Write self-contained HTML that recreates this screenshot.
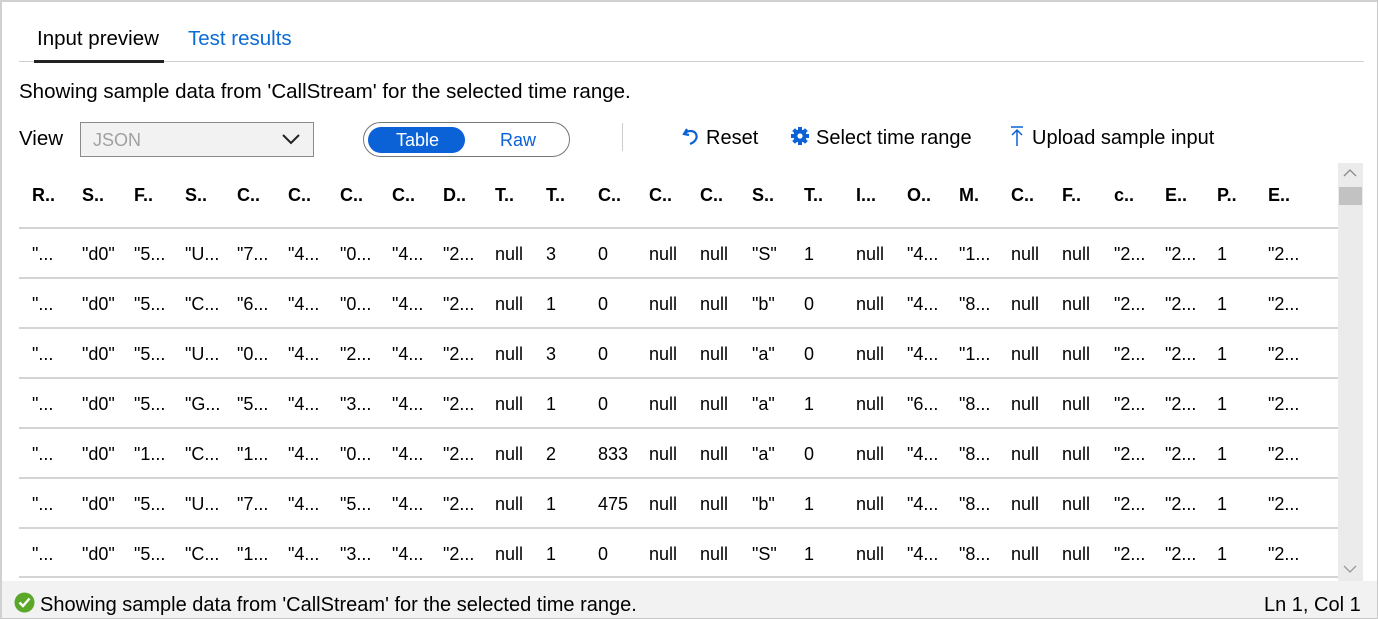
<!DOCTYPE html>
<html><head><meta charset="utf-8"><style>
*{margin:0;padding:0;box-sizing:border-box}
body{width:1378px;height:619px;overflow:hidden;background:#fff;font-family:"Liberation Sans",sans-serif;color:#000;position:relative}
.frame{position:absolute;left:0;top:0;width:1378px;height:619px;border:1px solid #c8c8c8;border-top:2px solid #d0d0d0;border-left:2px solid #d0d0d0}
.a{position:absolute;white-space:nowrap}
.hl{position:absolute;left:19px;width:1319px;height:2px;background:#d4d4d4}
.c{position:absolute;font-size:18px;white-space:nowrap}
.h{font-weight:bold}
</style></head><body>
<div class="frame"></div>
<div class="a" style="left:37px;top:27px;font-size:20.5px">Input preview</div>
<div class="a" style="left:188px;top:27px;font-size:20.5px;color:#0a6ad6">Test results</div>
<div class="a" style="left:19px;top:61px;width:1345px;height:1px;background:#d0d0d0"></div>
<div class="a" style="left:34px;top:60px;width:130px;height:3px;background:#222"></div>
<div class="a" style="left:19px;top:80px;font-size:20.5px">Showing sample data from 'CallStream' for the selected time range.</div>
<div class="a" style="left:19px;top:127px;font-size:20.5px">View</div>
<div class="a" style="left:80px;top:122px;width:234px;height:35px;background:#f2f2f2;border:1px solid #8a8a8a"></div>
<div class="a" style="left:93px;top:130px;font-size:18px;color:#a0a0a0">JSON</div>
<svg class="a" style="left:281px;top:132px" width="20" height="14"><path d="M2 3 L10 11 L18 3" fill="none" stroke="#222" stroke-width="2"/></svg>
<div class="a" style="left:363px;top:122px;width:207px;height:35px;border:1.5px solid #777;border-radius:18px"></div>
<div class="a" style="left:368px;top:127px;width:97px;height:26px;background:#0a62d6;border-radius:13px"></div>
<div class="a" style="left:396px;top:130px;font-size:18px;color:#fff">Table</div>
<div class="a" style="left:500px;top:130px;font-size:18px;color:#0a62d6">Raw</div>
<div class="a" style="left:622px;top:123px;width:1px;height:28px;background:#ccc"></div>
<svg class="a" style="left:681px;top:126px" width="20" height="20"><path d="M6 3 L3 8 L8 9 M3.5 8 C6 4 13 4 15 8 C17 12 14 16 9 18" fill="none" stroke="#0a62d6" stroke-width="2.2"/></svg>
<div class="a" style="left:706px;top:127px;font-size:20px">Reset</div>
<svg class="a" style="left:790px;top:126px" width="20" height="20" viewBox="0 0 20 20"><g fill="#0a62d6"><circle cx="10" cy="10" r="6.5"/><rect x="8" y="1" width="4" height="18"/><rect x="1" y="8" width="18" height="4"/><rect x="8" y="1" width="4" height="18" transform="rotate(45 10 10)"/><rect x="8" y="1" width="4" height="18" transform="rotate(-45 10 10)"/></g><circle cx="10" cy="10" r="2.6" fill="#fff"/></svg>
<div class="a" style="left:816px;top:127px;font-size:20px">Select time range</div>
<svg class="a" style="left:1009px;top:125px" width="16" height="22"><path d="M2 2 H14 M8 5 V21 M3 10 L8 5 L13 10" fill="none" stroke="#0a62d6" stroke-width="1.5"/></svg>
<div class="a" style="left:1032px;top:127px;font-size:20px">Upload sample input</div>
<div class="a" style="left:1338px;top:163px;width:25px;height:418px;background:#ebebeb"></div>
<div class="a" style="left:1339px;top:187px;width:23px;height:18px;background:#c2c2c2"></div>
<svg class="a" style="left:1342px;top:167px" width="16" height="12"><path d="M2 9 L8 3 L14 9" fill="none" stroke="#888" stroke-width="1.3"/></svg>
<svg class="a" style="left:1342px;top:563px" width="16" height="12"><path d="M2 3 L8 9 L14 3" fill="none" stroke="#999" stroke-width="1.3"/></svg>
<div id="t"></div>
<div class="a" style="left:0;top:581px;width:1378px;height:38px;background:#f2f2f2;border-left:2px solid #d0d0d0;border-right:1px solid #c8c8c8;border-bottom:1px solid #c8c8c8"></div>
<svg class="a" style="left:14px;top:592px" width="21" height="21"><circle cx="10.5" cy="10.5" r="10" fill="#5ba829"/><path d="M5.5 10.5 L9 14 L15.5 6.5" fill="none" stroke="#fff" stroke-width="2.4"/></svg>
<div class="a" style="left:40px;top:594px;font-size:20px">Showing sample data from 'CallStream' for the selected time range.</div>
<div class="a" style="left:1264px;top:594px;font-size:20px">Ln 1, Col 1</div>
<script>
var xs=[33,83,135,186,238,289,341,393,444,496,547,599,650,701,753,805,857,908,960,1012,1063,1115,1166,1218,1269];
var H="R..|S..|F..|S..|C..|C..|C..|C..|D..|T..|T..|C..|C..|C..|S..|T..|I...|O..|M.|C..|F..|c..|E..|P..|E..".split("|");
var R=[
'"...|"d0"|"5...|"U...|"7...|"4...|"0...|"4...|"2...|null|3|0|null|null|"S"|1|null|"4...|"1...|null|null|"2...|"2...|1|"2...',
'"...|"d0"|"5...|"C...|"6...|"4...|"0...|"4...|"2...|null|1|0|null|null|"b"|0|null|"4...|"8...|null|null|"2...|"2...|1|"2...',
'"...|"d0"|"5...|"U...|"0...|"4...|"2...|"4...|"2...|null|3|0|null|null|"a"|0|null|"4...|"1...|null|null|"2...|"2...|1|"2...',
'"...|"d0"|"5...|"G...|"5...|"4...|"3...|"4...|"2...|null|1|0|null|null|"a"|1|null|"6...|"8...|null|null|"2...|"2...|1|"2...',
'"...|"d0"|"1...|"C...|"1...|"4...|"0...|"4...|"2...|null|2|833|null|null|"a"|0|null|"4...|"8...|null|null|"2...|"2...|1|"2...',
'"...|"d0"|"5...|"U...|"7...|"4...|"5...|"4...|"2...|null|1|475|null|null|"b"|1|null|"4...|"8...|null|null|"2...|"2...|1|"2...',
'"...|"d0"|"5...|"C...|"1...|"4...|"3...|"4...|"2...|null|1|0|null|null|"S"|1|null|"4...|"8...|null|null|"2...|"2...|1|"2...'];
var s="";
function esc(t){return t.replace(/"/g,"&quot;");}
H.forEach(function(h,i){s+='<div class="c h" style="left:'+(xs[i]-1)+'px;top:185px">'+h+'</div>';});
[227,277,327,377,427,477,527,576].forEach(function(y){s+='<div class="hl" style="top:'+y+'px"></div>';});
R.forEach(function(r,j){r.split("|").forEach(function(v,i){s+='<div class="c" style="left:'+(xs[i]-1)+'px;top:'+(244+50*j)+'px">'+esc(v)+'</div>';});});
document.getElementById("t").innerHTML=s;
</script>
</body></html>
